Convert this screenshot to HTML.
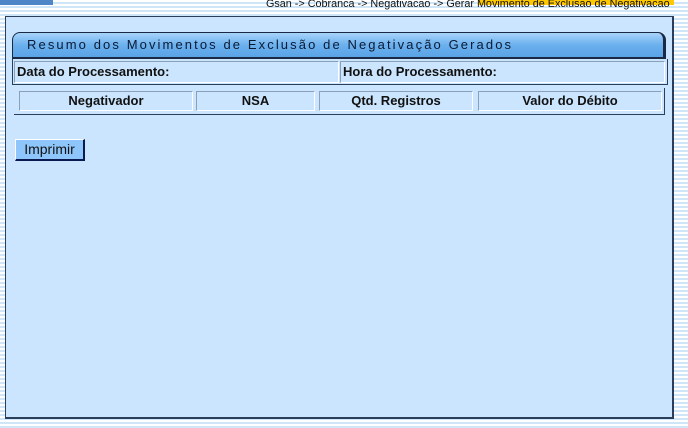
<!DOCTYPE html>
<html><head><style>
body{margin:0;width:688px;height:428px;overflow:hidden;position:relative;font-family:"Liberation Sans",Arial,sans-serif;
background:repeating-linear-gradient(to bottom,#fff 0,#fff 2px,#cfe6f8 2px,#cfe6f8 4px);}
.a{position:absolute}
.panel{left:5px;top:16px;width:666px;height:400px;background:#cbe5fe;border:1px solid #2b3f5c;border-width:1px 2px 2px 1px}
.tab{left:12px;top:32px;height:24px;border:1px solid #1a2a45;border-bottom:2px solid #1a2a45;border-right:3px solid #1a2a45;border-radius:8px 8px 0 0;background:linear-gradient(#a9d3fa,#6bb0ee 50%,#5aa3e6);font-size:13px;letter-spacing:2.1px;color:#0b1a33;line-height:24px;padding-left:14px;box-sizing:content-box;width:636px}
.cell{border:1px solid #8aa0b8;border-right-color:#fff;border-bottom-color:#fff;font-size:13px;font-weight:bold;color:#111;box-sizing:border-box}
.hd{text-align:center;line-height:18px;background:#cbe5fe}
.btn{left:15px;top:139px;width:70px;height:22px;background:#8ec6fb;border:1px solid #fff;border-right:2px solid #0a1a50;border-bottom:2px solid #0a1a50;box-sizing:border-box;font-size:14px;line-height:19px;text-align:center;color:#111}
</style></head><body>
<div class="a" style="left:0;top:0;width:53px;height:5px;background:#4f86c8"></div>
<div class="a" style="left:478px;top:0;width:196px;height:5px;background:#ffc800"></div>
<div class="a" style="left:266px;top:-2px;font-size:10.8px;color:#111;white-space:nowrap">Gsan -&gt; Cobranca -&gt; Negativacao -&gt; Gerar Movimento de Exclusao de Negativacao</div>
<div class="a panel"></div>
<div class="a tab">Resumo dos Movimentos de Exclusão de Negativação Gerados</div>
<div class="a" style="left:12px;top:59px;width:656px;height:26px;border:1px solid #2b3f5c;border-top:none;border-bottom:1px solid #2b3f5c;box-sizing:border-box"></div>
<div class="a cell" style="left:14px;top:61px;width:325px;height:22px;line-height:20px;padding-left:2px">Data do Processamento:</div>
<div class="a cell" style="left:340px;top:61px;width:325px;height:22px;line-height:20px;padding-left:2px">Hora do Processamento:</div>
<div class="a" style="left:14px;top:88px;width:651px;height:27px;border-right:1px solid #2b3f5c;border-bottom:1px solid #2b3f5c;box-sizing:border-box"></div>
<div class="a cell hd" style="left:19px;top:91px;width:174px;height:20px">Negativador</div>
<div class="a cell hd" style="left:196px;top:91px;width:119px;height:20px">NSA</div>
<div class="a cell hd" style="left:319px;top:91px;width:154px;height:20px">Qtd. Registros</div>
<div class="a cell hd" style="left:478px;top:91px;width:184px;height:20px">Valor do Débito</div>
<div class="a btn">Imprimir</div>
</body></html>
